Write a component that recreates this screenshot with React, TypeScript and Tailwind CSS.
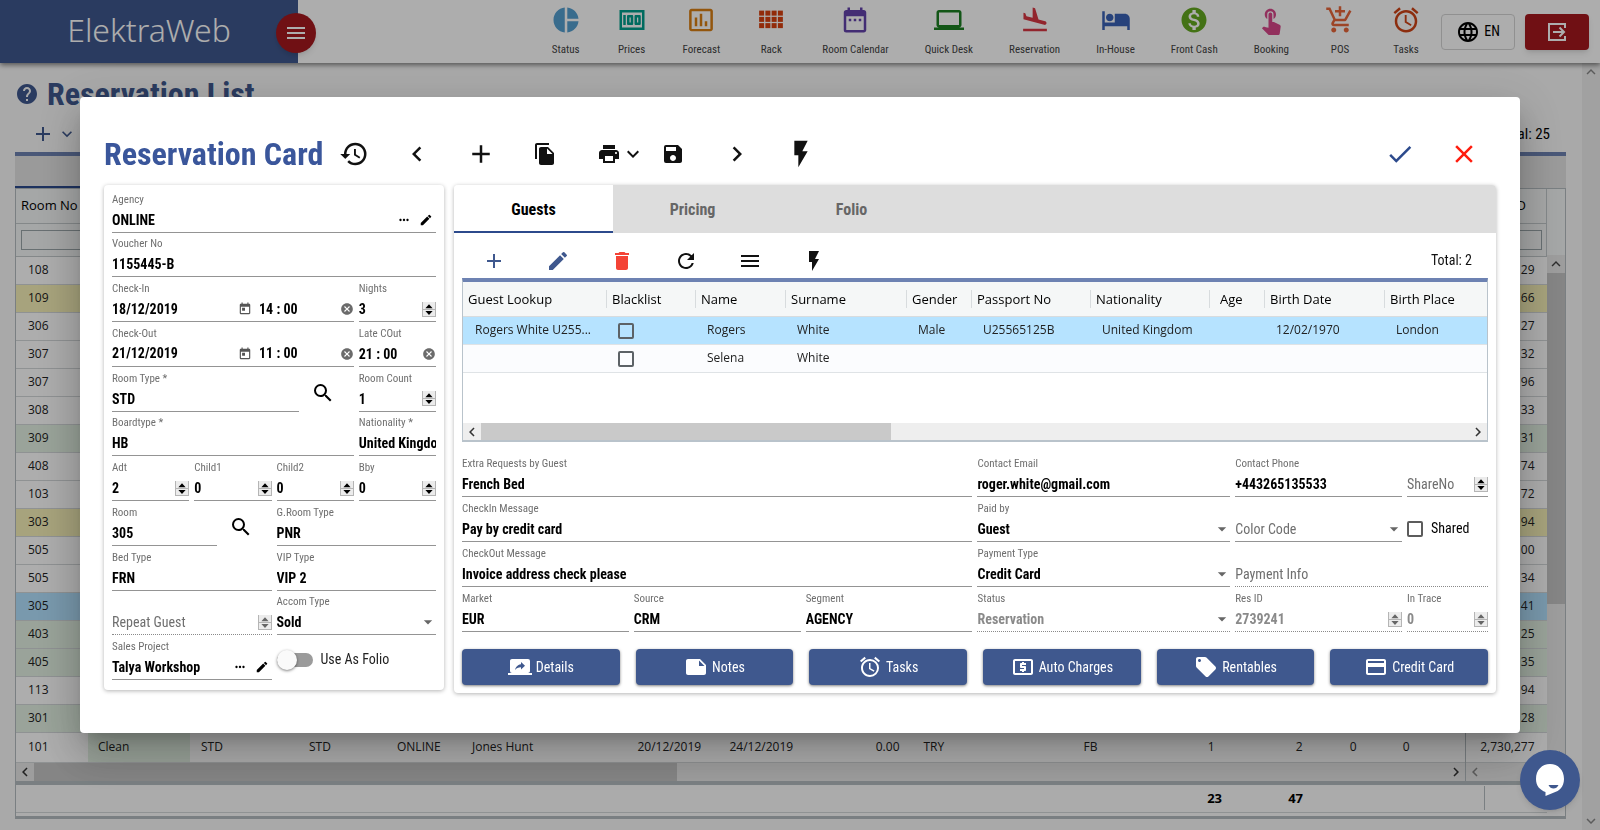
import { ReactNode, useId } from 'react';
import clsx from 'clsx';
import {
    MdAccessAlarm, MdAdd, MdAddShoppingCart, MdArrowDropDown, MdCancel, MdCheck, MdChevronLeft,
    MdChevronRight, MdClose, MdCreditCard, MdDateRange, MdDelete, MdEdit, MdExpandLess, MdExpandMore,
    MdFileCopy, MdFlashOn, MdFlightLand, MdHelp, MdHistory, MdHotel, MdInsertChartOutlined, MdLanguage,
    MdLaptop, MdLocalAtm, MdLocalOffer, MdMenu, MdMonetizationOn, MdMoney, MdMoreHoriz, MdNote,
    MdPieChart, MdPrint, MdRefresh, MdSave, MdScreenShare, MdSearch, MdToday, MdTouchApp,
} from 'react-icons/md';

function RackIcon(props: { className?: string }) {
    return (
        <svg viewBox="0 0 24 24" fill="currentColor" className={props.className}>
            {[2, 7, 12, 17].map((x) => [4, 9, 14].map((y) => (
                <rect key={`${x}-${y}`} x={x + 0.5} y={y + 0.5} width="4" height="4" />
            )))}
        </svg>
    );
}

const navItems = [
    { label: 'Status', icon: MdPieChart, color: 'text-[#559fd0]' },
    { label: 'Prices', icon: MdMoney, color: 'text-[#009e8c]' },
    { label: 'Forecast', icon: MdInsertChartOutlined, color: 'text-[#d97f14]' },
    { label: 'Rack', icon: RackIcon, color: 'text-[#d8400f]' },
    { label: 'Room Calendar', icon: MdDateRange, color: 'text-[#6443ab]' },
    { label: 'Quick Desk', icon: MdLaptop, color: 'text-[#1c7f22]' },
    { label: 'Reservation', icon: MdFlightLand, color: 'text-[#d83743]' },
    { label: 'In-House', icon: MdHotel, color: 'text-[#3a62b5]' },
    { label: 'Front Cash', icon: MdMonetizationOn, color: 'text-[#64a820]' },
    { label: 'Booking', icon: MdTouchApp, color: 'text-[#d8478a]' },
    { label: 'POS', icon: MdAddShoppingCart, color: 'text-[#e8663a]' },
    { label: 'Tasks', icon: MdAccessAlarm, color: 'text-[#cf4316]' },
];

const rooms = [
    { no: '108', id: '29', color: 'bg-white' },
    { no: '109', id: '66', color: 'bg-[#f7f1b8]' },
    { no: '306', id: '27', color: 'bg-white' },
    { no: '307', id: '32', color: 'bg-white' },
    { no: '307', id: '96', color: 'bg-white' },
    { no: '308', id: '33', color: 'bg-white' },
    { no: '309', id: '31', color: 'bg-[#e3f1e3]' },
    { no: '408', id: '74', color: 'bg-white' },
    { no: '103', id: '72', color: 'bg-white' },
    { no: '303', id: '94', color: 'bg-[#f7f1b8]' },
    { no: '505', id: '00', color: 'bg-white' },
    { no: '505', id: '34', color: 'bg-white' },
    { no: '305', id: '41', color: 'bg-[#b3e2ff]' },
    { no: '403', id: '25', color: 'bg-[#e3f1e3]' },
    { no: '405', id: '35', color: 'bg-[#e3f1e3]' },
    { no: '113', id: '94', color: 'bg-white' },
    { no: '301', id: '28', color: 'bg-[#e3f1e3]' },
];

const actions = [
    { label: 'Details', icon: MdScreenShare },
    { label: 'Notes', icon: MdNote },
    { label: 'Tasks', icon: MdAccessAlarm },
    { label: 'Auto Charges', icon: MdLocalAtm },
    { label: 'Rentables', icon: MdLocalOffer },
    { label: 'Credit Card', icon: MdCreditCard },
];

function Spinner() {
    return (
        <svg viewBox="0 0 14 15" className="h-[15px] w-[14px] shrink-0" aria-hidden="true">
            <path fill="#ececec" d="M0 0h14v15H0z" />
            <path stroke="#b5b5b5" d="M.5 0v15M13.5 0v15M0 7.5h14M0 14.5h14" />
            <path fill="currentColor" d="M7 2.2l3.6 4H3.4zM7 13l3.6-4H3.4z" />
        </svg>
    );
}

function Field(props: {
    label: string,
    value?: string,
    kind?: 'text' | 'number' | 'select',
    disabled?: boolean,
    className?: string,
    after?: ReactNode,
}) {
    const { label, value = '', kind = 'text', disabled = false, className, after } = props;
    const id = useId();
    const empty = value === '';
    const control = clsx(
        'h-6 min-w-0 flex-1 appearance-none bg-transparent text-[14px] outline-none placeholder:text-[#6f6f6f]',
        empty ? 'font-normal text-[#6f6f6f]' : 'font-bold',
        !empty && (disabled ? 'text-[#8a8a8a]' : 'text-black'),
    );

    return (
        <div className={clsx(
            'flex flex-col justify-end border-b',
            disabled ? 'border-dotted border-[#8a8a8a]' : 'border-[#949494]',
            className,
        )}>
            {!empty && <label htmlFor={id} className="h-4 text-[11px] leading-4 whitespace-nowrap text-[#6f6f6f]">{label}</label>}
            <div className="flex h-6 items-center">
                {kind === 'select' ? (
                    <select id={id} aria-label={label} disabled={disabled} defaultValue={value} className={control}>
                        <option value={value}>{value || label}</option>
                    </select>
                ) : (
                    <input
                        id={id}
                        aria-label={label}
                        disabled={disabled}
                        defaultValue={value}
                        placeholder={label}
                        inputMode={kind === 'number' ? 'numeric' : 'text'}
                        className={control}
                    />
                )}
                {kind === 'number' && <span className={disabled ? 'text-[#666]' : 'text-black'}><Spinner /></span>}
                {kind === 'select' && <MdArrowDropDown className="pointer-events-none -mr-0.5 size-5 shrink-0 text-[#666]" />}
                {after}
            </div>
        </div>
    );
}

function ClearButton() {
    return (
        <button type="button" aria-label="Clear" className="text-[#6b6b6b]"><MdCancel className="size-[14px]" /></button>
    );
}

function DateTimeField(props: { label: string, date: string, time: string }) {
    const { label, date, time } = props;
    const id = useId();

    return (
        <div className="col-span-3 flex flex-col justify-end border-b border-[#949494]">
            <label htmlFor={id} className="h-4 text-[11px] leading-4 text-[#6f6f6f]">{label}</label>
            <div className="flex h-6 items-center text-[14px] font-bold text-black">
                <input id={id} defaultValue={date} className="w-[126px] outline-none" />
                <button type="button" aria-label="Pick date" className="text-[#555]"><MdToday className="size-[14px]" /></button>
                <input aria-label={`${label} time`} defaultValue={time} className="ml-[7px] min-w-0 flex-1 outline-none" />
                <ClearButton />
            </div>
        </div>
    );
}

function LookupButtons() {
    return (
        <div className="flex items-center gap-2 pr-[3px] text-black">
            <button type="button" aria-label="More"><MdMoreHoriz className="size-[14px]" /></button>
            <button type="button" aria-label="Edit"><MdEdit className="size-[14px]" /></button>
        </div>
    );
}

function SearchField(props: { label: string, value: string, className?: string }) {
    const { label, value, className } = props;

    return (
        <div className={clsx('flex', className)}>
            <Field label={label} value={value} className="min-w-0 flex-1" />
            <button type="button" aria-label={`Search ${label}`} className="w-[55px] pt-2 pl-3"><MdSearch className="size-6 text-black" /></button>
        </div>
    );
}

function ToolButton(props: { label: string, className?: string, children: ReactNode }) {
    return (
        <button type="button" aria-label={props.label} className={clsx('flex w-16 shrink-0 items-center justify-center', props.className)}>
            {props.children}
        </button>
    );
}

function Header() {
    return (
        <header className="relative z-10 flex h-[63px] bg-white shadow-[0_2px_5px_rgba(0,0,0,0.5)]">
            <div className="relative flex w-[298px] shrink-0 items-center justify-center bg-[#3f588e] pb-1 font-['Noto_Sans',sans-serif] text-[32px] font-light text-white">
                ElektraWeb
                <button type="button" aria-label="Menu" className="absolute top-[13px] -right-[18px] flex size-10 items-center justify-center rounded-full bg-[#a5191e] shadow-md">
                    <MdMenu className="size-6 text-white" />
                </button>
            </div>
            <nav className="flex min-w-0 flex-1 justify-end gap-9 pr-5">
                {navItems.map(({ label, icon: Icon, color }) => (
                    <a key={label} href="#" className="flex flex-col items-center pt-[5px] whitespace-nowrap">
                        <Icon className={clsx('size-[30px]', color)} />
                        <span className="mt-[7px] text-[11px] leading-4 text-[#444]">{label}</span>
                    </a>
                ))}
            </nav>
            <div className="flex items-center gap-2.5 pr-[11px]">
                <button type="button" className="flex h-9 w-[74px] items-center justify-center gap-1 rounded-sm border border-[#d5d5d5] text-[14px] text-black">
                    <MdLanguage className="size-6" />EN
                </button>
                <button type="button" aria-label="Log out" className="flex h-9 w-16 items-center justify-center rounded-sm bg-[#a5191e] text-white shadow-md">
                    <svg viewBox="0 0 24 24" className="size-6" fill="none" stroke="currentColor" strokeWidth="2">
                        <path d="M20 8V4H4v16h16v-4" />
                        <path d="M8 12h11M14.5 7.5L19 12l-4.5 4.5" />
                    </svg>
                </button>
            </div>
        </header>
    );
}

function ListCols() {
    return (
        <colgroup>
            <col className="w-[72px]" />
            <col className="w-[102px]" />
            <col className="w-[108px]" />
            <col className="w-[88px]" />
            <col className="w-[75px]" />
            <col />
            <col className="w-[92px]" />
            <col className="w-[90px]" />
            <col className="w-[104px]" />
            <col className="w-[160px]" />
            <col className="w-[65px]" />
            <col className="w-[88px]" />
            <col className="w-[89px]" />
            <col className="w-[54px]" />
            <col className="w-[54px]" />
            <col className="w-[44px]" />
            <col className="w-[81px]" />
        </colgroup>
    );
}

function ReservationList() {
    return (
        <main className="flex min-h-0 flex-1">
            <div className="min-w-0 flex-1 pr-4 pl-[15px]">
                <div className="flex h-[53px] items-center gap-2 pt-[9px] text-[#3f588e]">
                    <MdHelp className="size-6" />
                    <h1 className="text-[32px] leading-none font-bold">Reservation List</h1>
                </div>
                <div className="flex h-9 items-center text-[#3f588e]">
                    <button type="button" aria-label="Add" className="ml-4"><MdAdd className="size-6" /></button>
                    <button type="button" aria-label="Add options" className="ml-0.5"><MdExpandMore className="size-5" /></button>
                    <span className="ml-auto pr-4 text-[15px] text-black">Total: 25</span>
                </div>
                <div className="flex h-9 border-t-4 border-[#6d82b2] bg-[#e4e4e4]">
                    <div className="w-32 border-b-2 border-[#2c4a8c]" />
                </div>
                <div className="border border-b-[3px] border-[#b4bcc0] font-['Open_Sans',sans-serif] text-[13px] text-[#222]">
                    <div className="flex">
                        <table className="w-full min-w-0 flex-1 table-fixed border-collapse">
                            <ListCols />
                            <thead className="bg-[#f4f6f6] text-left">
                                <tr className="h-[34px] border-b border-[#c3c9cb]">
                                    <th scope="col" className="pl-[5px] font-medium whitespace-nowrap text-black">Room No</th>
                                    <td colSpan={15} />
                                    <th scope="col" className="border-r border-[#c3c9cb] pr-5 text-right font-medium text-black">Res ID</th>
                                </tr>
                                <tr className="h-[33px] border-b border-[#c3c9cb]">
                                    <td className="pl-[5px]"><input aria-label="Filter by room" className="block h-5 w-full border border-[#9aa5a9]" /></td>
                                    <td colSpan={15} />
                                    <td className="border-r border-[#c3c9cb] pr-1"><input aria-label="Filter by id" className="block h-5 w-full border border-[#9aa5a9]" /></td>
                                </tr>
                            </thead>
                            <tbody className="text-[12px]">
                                {rooms.map((room, i) => (
                                    <tr key={i} className={clsx('h-7 border-b border-[#d3d7d9]', room.color)}>
                                        <td className="pl-3">{room.no}</td>
                                        <td colSpan={15} />
                                        <td className="pr-3 text-right">{room.id}</td>
                                    </tr>
                                ))}
                                <tr className="h-[30px] border-b border-[#d3d7d9] bg-white whitespace-nowrap">
                                    <td className="pl-3">101</td>
                                    <td className="bg-[#e3f1e3] pl-2.5">Clean</td>
                                    <td className="pl-[11px]">STD</td>
                                    <td className="pl-[11px]">STD</td>
                                    <td className="pl-[11px]">ONLINE</td>
                                    <td className="pl-[11px]">Jones Hunt</td>
                                    <td className="pl-3">20/12/2019</td>
                                    <td className="pl-3">24/12/2019</td>
                                    <td className="pr-3 text-right">0.00</td>
                                    <td className="pl-3">TRY</td>
                                    <td className="pl-3">FB</td>
                                    <td className="pr-2.5 text-right">1</td>
                                    <td className="pr-[11px] text-right">2</td>
                                    <td className="pr-[11px] text-right">0</td>
                                    <td className="pr-3 text-right">0</td>
                                    <td className="border-r border-[#b4bcc0]" />
                                    <td className="pr-3 text-right">2,730,277</td>
                                </tr>
                            </tbody>
                        </table>
                        <div className="flex w-[18px] flex-col bg-[#f4f6f6] pt-[66px]">
                            <div className="flex flex-1 flex-col items-center bg-[#e8e8e8] text-[#444]">
                                <MdExpandLess className="size-[18px]" />
                                <div className="h-[331px] w-full bg-[#c4c4c4]" />
                                <MdExpandMore className="mt-auto size-[18px]" />
                            </div>
                        </div>
                    </div>
                    <div className="flex h-[18px] items-center bg-[#e8e8e8] text-[#333]">
                        <MdChevronLeft className="size-[18px]" />
                        <div className="h-full w-[643px] bg-[#c4c4c4]" />
                        <MdChevronRight className="ml-auto size-[18px]" />
                        <div className="flex h-full w-[100px] items-center border-l border-[#b4bcc0] text-[#888]"><MdChevronLeft className="size-[18px]" /></div>
                    </div>
                    <div className="border-t-4 border-[#b4bcc0] bg-[#fdfdfd] pr-[18px] pb-[3px]">
                        <table className="w-full table-fixed border-collapse font-bold text-black">
                            <ListCols />
                            <tbody>
                                <tr className="h-7 border-b border-[#d3d7d9]">
                                    <td colSpan={11} />
                                    <td className="pr-[3px] text-right">23</td>
                                    <td className="pr-[11px] text-right">47</td>
                                    <td colSpan={3} />
                                    <td><div className="ml-[18px] h-6 border-l border-[#b4bcc0]" /></td>
                                </tr>
                            </tbody>
                        </table>
                    </div>
                </div>
            </div>
            <div className="flex w-[18px] flex-col items-center justify-between bg-[#ededed] text-[#888]">
                <MdExpandLess className="size-[18px]" />
                <MdExpandMore className="size-[18px]" />
            </div>
        </main>
    );
}

function BookingForm() {
    const folioId = useId();

    return (
        <form className="mb-[3px] grid w-[340px] shrink-0 grid-cols-4 grid-rows-[repeat(11,minmax(0,1fr))] gap-x-[5px] rounded-sm px-2 pt-[3px] pb-[10px] shadow-[0_1px_4px_rgba(0,0,0,0.3)]">
            <Field label="Agency" value="ONLINE" className="col-span-4" after={<LookupButtons />} />
            <Field label="Voucher No" value="1155445-B" className="col-span-4" />
            <DateTimeField label="Check-In" date="18/12/2019" time="14 : 00" />
            <Field label="Nights" value="3" kind="number" />
            <DateTimeField label="Check-Out" date="21/12/2019" time="11 : 00" />
            <Field label="Late COut" value="21 : 00" after={<ClearButton />} />
            <SearchField label="Room Type *" value="STD" className="col-span-3" />
            <Field label="Room Count" value="1" kind="number" />
            <Field label="Boardtype *" value="HB" className="col-span-3" />
            <Field label="Nationality *" value="United Kingdom" />
            <Field label="Adt" value="2" kind="number" />
            <Field label="Child1" value="0" kind="number" />
            <Field label="Child2" value="0" kind="number" />
            <Field label="Bby" value="0" kind="number" />
            <SearchField label="Room" value="305" className="col-span-2" />
            <Field label="G.Room Type" value="PNR" className="col-span-2" />
            <Field label="Bed Type" value="FRN" className="col-span-2" />
            <Field label="VIP Type" value="VIP 2" className="col-span-2" />
            <Field label="Repeat Guest" kind="number" disabled className="col-span-2" />
            <Field label="Accom Type" value="Sold" kind="select" className="col-span-2" />
            <Field label="Sales Project" value="Talya Workshop" className="col-span-2" after={<LookupButtons />} />
            <label htmlFor={folioId} className="col-span-2 flex items-center pt-1 text-[14px] text-[#222]">
                <input id={folioId} type="checkbox" role="switch" className="peer sr-only" />
                <span className="mr-2 flex h-[14px] w-9 items-center rounded-full bg-[#9b9b9b]">
                    <span className="size-5 shrink-0 rounded-full bg-[#fafafa] shadow-[0_1px_3px_rgba(0,0,0,0.5)]" />
                </span>
                Use As Folio
            </label>
        </form>
    );
}

const heads = [
    { label: 'Guest Lookup', width: 'w-[143px]' },
    { label: 'Blacklist', width: 'w-[89px]' },
    { label: 'Name', width: 'w-[90px]' },
    { label: 'Surname', width: 'w-[121px]' },
    { label: 'Gender', width: 'w-[65px]' },
    { label: 'Passport No', width: 'w-[119px]' },
    { label: 'Nationality', width: 'w-[119px]' },
    { label: 'Age', width: 'w-[55px]' },
    { label: 'Birth Date', width: 'w-[120px]' },
    { label: 'Birth Place', width: 'w-auto' },
];

const guests = [
    ['Rogers White U255...', '', 'Rogers', 'White', 'Male', 'U25565125B', 'United Kingdom', '', '12/02/1970', 'London'],
    ['', '', 'Selena', 'White', '', '', '', '', '', ''],
];

function GuestTable() {
    return (
        <div className="flex h-[164px] flex-col border border-t-4 border-b-2 border-[#b9c3cb] border-t-[#6d82b2] font-['Open_Sans',sans-serif] text-[#222]">
            <table className="w-full table-fixed border-collapse text-left">
                <thead className="bg-[#f5f7f7] text-[13px] text-black">
                    <tr className="h-[34px] border-b border-[#d8dcde]">
                        {heads.map(({ label, width }, i) => (
                            <th key={label} scope="col" className={clsx('p-0 font-medium', width)}>
                                <div className={clsx('h-[18px] leading-[18px] whitespace-nowrap', i > 0 && 'border-l border-[#d8dcde]', label === 'Age' ? 'pl-2.5' : 'pl-[5px]')}>{label}</div>
                            </th>
                        ))}
                    </tr>
                </thead>
                <tbody className="text-[12px]">
                    {guests.map((guest, row) => (
                        <tr key={row} className={clsx('h-7 border-b border-[#dfe3e6]', row === 0 ? 'bg-[#b6e3ff]' : 'bg-[#fbfcfe]')}>
                            {guest.map((text, i) => (
                                <td key={i} className="pl-3 whitespace-nowrap">
                                    {i === 1
                                        ? <input type="checkbox" aria-label="Blacklist" className="mt-0.5 block size-4 appearance-none rounded-xs border-2 border-[#5c6266]" />
                                        : text}
                                </td>
                            ))}
                        </tr>
                    ))}
                </tbody>
            </table>
            <div className="mt-auto flex h-[17px] items-center bg-[#eee] text-[#333]">
                <MdChevronLeft className="size-[18px]" />
                <div className="h-full w-2/5 bg-[#c9c9c9]" />
                <MdChevronRight className="ml-auto size-[18px]" />
            </div>
        </div>
    );
}

function GuestPanel() {
    const sharedId = useId();

    return (
        <section className="min-w-0 flex-1 overflow-hidden rounded-sm shadow-[0_1px_4px_rgba(0,0,0,0.3)]">
            <div role="tablist" className="flex h-12 bg-[#ddd] text-[16px] font-bold text-[#666]">
                <button type="button" role="tab" aria-selected="true" className="w-[159px] border-b-2 border-[#2c4a8c] bg-white pt-1 text-black">Guests</button>
                <button type="button" role="tab" className="w-[159px] pt-0.5">Pricing</button>
                <button type="button" role="tab" className="w-[159px] pt-0.5">Folio</button>
            </div>
            <div className="px-2 pb-2">
                <div className="flex h-[45px] items-stretch pt-2.5 text-[#111]">
                    <ToolButton label="Add guest" className="text-[#3f588e]"><MdAdd className="size-6" /></ToolButton>
                    <ToolButton label="Edit guest" className="text-[#3f588e]"><MdEdit className="size-6" /></ToolButton>
                    <ToolButton label="Delete guest" className="text-[#f44336]"><MdDelete className="size-6" /></ToolButton>
                    <ToolButton label="Refresh"><MdRefresh className="size-6" /></ToolButton>
                    <ToolButton label="List menu"><MdMenu className="size-6" /></ToolButton>
                    <ToolButton label="Quick actions"><MdFlashOn className="size-6" /></ToolButton>
                    <span className="mr-4 ml-auto self-center text-[14px]">Total: 2</span>
                </div>
                <GuestTable />
                <form className="mt-2.5 grid auto-rows-[45px] grid-cols-12 gap-x-[5px]">
                    <Field label="Extra Requests by Guest" value="French Bed" className="col-span-6" />
                    <Field label="Contact Email" value="roger.white@gmail.com" className="col-span-3" />
                    <Field label="Contact Phone" value="+443265135533" className="col-span-2" />
                    <Field label="ShareNo" kind="number" />
                    <Field label="CheckIn Message" value="Pay by credit card" className="col-span-6" />
                    <Field label="Paid by" value="Guest" kind="select" className="col-span-3" />
                    <Field label="Color Code" kind="select" className="col-span-2" />
                    <label htmlFor={sharedId} className="flex items-center gap-2 pt-[18px] text-[14px] text-black">
                        <input id={sharedId} type="checkbox" className="size-4 shrink-0 appearance-none rounded-xs border-2 border-[#5c5c5c]" />
                        Shared
                    </label>
                    <Field label="CheckOut Message" value="Invoice address check please" className="col-span-6" />
                    <Field label="Payment Type" value="Credit Card" kind="select" className="col-span-3" />
                    <Field label="Payment Info" disabled className="col-span-3" />
                    <Field label="Market" value="EUR" className="col-span-2" />
                    <Field label="Source" value="CRM" className="col-span-2" />
                    <Field label="Segment" value="AGENCY" className="col-span-2" />
                    <Field label="Status" value="Reservation" kind="select" disabled className="col-span-3" />
                    <Field label="Res ID" value="2739241" kind="number" disabled className="col-span-2" />
                    <Field label="In Trace" value="0" kind="number" disabled />
                </form>
                <div className="mt-[17px] grid grid-cols-6 gap-4">
                    {actions.map(({ label, icon: Icon }) => (
                        <button key={label} type="button" className="flex h-9 items-center justify-center gap-1 rounded-sm bg-[#3f588e] text-[14px] text-white shadow-[0_1px_3px_rgba(0,0,0,0.5)]">
                            <Icon className="size-6" />{label}
                        </button>
                    ))}
                </div>
            </div>
        </section>
    );
}

function ReservationCard() {
    return (
        <div className="fixed inset-0 z-20 flex items-center justify-center bg-black/32">
            <div role="dialog" aria-label="Reservation Card" className="w-[90%] rounded-sm bg-white px-6 pb-10 shadow-[0_11px_15px_-7px_rgba(0,0,0,0.2),0_24px_38px_3px_rgba(0,0,0,0.14),0_9px_46px_8px_rgba(0,0,0,0.12)]">
                <div className="flex h-[88px] items-stretch pt-[26px] text-[#111]">
                    <div className="flex w-[281px] shrink-0 items-center gap-4">
                        <h2 className="text-[32px] leading-none font-bold whitespace-nowrap text-[#3a569b]">Reservation Card</h2>
                        <button type="button" aria-label="History"><MdHistory className="size-[30px]" /></button>
                    </div>
                    <div className="flex min-w-0 flex-1">
                        <ToolButton label="Previous"><MdChevronLeft className="size-[30px]" /></ToolButton>
                        <ToolButton label="New"><MdAdd className="size-[30px]" /></ToolButton>
                        <ToolButton label="Copy"><MdFileCopy className="size-6" /></ToolButton>
                        <ToolButton label="Print" className="pl-6"><MdPrint className="size-6 shrink-0" /><MdExpandMore className="size-6 shrink-0" /></ToolButton>
                        <ToolButton label="Save"><MdSave className="size-6" /></ToolButton>
                        <ToolButton label="Next"><MdChevronRight className="size-[30px]" /></ToolButton>
                        <ToolButton label="Actions"><MdFlashOn className="size-8" /></ToolButton>
                        <ToolButton label="Confirm" className="ml-auto text-[#2c4a8c]"><MdCheck className="size-[30px]" /></ToolButton>
                        <ToolButton label="Close" className="text-[#ff1d0f]"><MdClose className="size-[30px]" /></ToolButton>
                    </div>
                </div>
                <div className="flex gap-2.5">
                    <BookingForm />
                    <GuestPanel />
                </div>
            </div>
        </div>
    );
}

function App() {
    return (
        <div className="flex h-screen flex-col overflow-hidden bg-[#fafafa] font-['Roboto_Condensed','Liberation_Sans_Narrow',Roboto,sans-serif]">
            <Header />
            <ReservationList />
            <ReservationCard />

            {/* chat bubble stays above the dialog */}
            <button type="button" aria-label="Chat" className="fixed right-5 bottom-5 z-30 flex size-[60px] items-center justify-center rounded-full bg-[#3f588e] shadow-md">
                <svg viewBox="0 0 28 32" className="h-8 w-7">
                    <path fill="#fff" d="M14 0C22 0 28 6 28 15c0 8-5 12-10 13.5L9.5 32v-4C4 26 0 22 0 15 0 6 6 0 14 0z" />
                    <path fill="#3f588e" d="M12.5 21h10c-1 2.5-3 3.5-5 3.5s-4-1-5-3.5z" />
                </svg>
            </button>
        </div>
    );
}

export default App;
